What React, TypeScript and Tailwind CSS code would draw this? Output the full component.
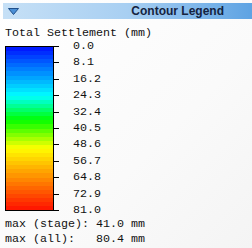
const LABELS = ["0.0", "8.1", "16.2", "24.3", "32.4", "40.5", "48.6", "56.7", "64.8", "72.9", "81.0"]

// colour stops of the contour scale, t from 0 (top) to 1 (bottom)
const STOPS: [number, number, number, number][] = [
    [0, 0, 16, 255],
    [0.3, 0, 255, 255],
    [0.45, 0, 255, 0],
    [0.62, 255, 255, 0],
    [1, 255, 16, 0],
]

const BANDS = 40

const colorAt = (t: number) => {
    for (let i = 1; i < STOPS.length; i++) {
        const [t1, r1, g1, b1] = STOPS[i]
        const [t0, r0, g0, b0] = STOPS[i - 1]
        if (t <= t1) {
            const k = (t - t0) / (t1 - t0)
            const mix = (a: number, b: number) => Math.round(a + (b - a) * k)
            return `rgb(${mix(r0, r1)}, ${mix(g0, g1)}, ${mix(b0, b1)})`
        }
    }
    return "rgb(255, 0, 0)"
}

export default function App() {
    return (
        <div className="w-[252px] h-[248px] overflow-hidden bg-[linear-gradient(135deg,#ffffff_0%,#fafafa_60%,#f4f4f4_100%)] pt-[3px] pl-[3px] font-['Liberation_Mono',monospace] text-[11.67px] text-[#111]">
            {/* Title bar */}
            <div className="h-[16px] flex items-center justify-between bg-[linear-gradient(90deg,#c6e0f6_0%,#a8cff2_50%,#5ea3e3_100%)] pl-[5px] pr-[28px]">
                <svg width="11" height="7" viewBox="0 0 11 7">
                    <path d="M0.5 0.5 H10.5 L5.5 6.5 Z" fill="#4a8fd6" stroke="#1f4f8a" strokeWidth="1" />
                </svg>
                <span className="font-['Liberation_Sans',sans-serif] font-bold text-[12px] leading-none text-[#15233f]">
                    Contour Legend
                </span>
            </div>

            <div className="pl-[2px]">
                <div className="mt-[8px] leading-[13px] whitespace-pre">Total Settlement (mm)</div>

                {/* Colour bar with ticks and labels */}
                <div className="mt-[6px] flex items-start">
                    <div className="w-[49px] h-[165px] border border-black flex flex-col">
                        {Array.from({ length: BANDS }, (_, i) => (
                            <div key={i} className="flex-1" style={{ backgroundColor: colorAt((i + 0.5) / BANDS) }} />
                        ))}
                    </div>
                    <div className="w-[5px] h-[165px] flex flex-col justify-between">
                        {LABELS.map((l) => (
                            <div key={l} className="h-px bg-black" />
                        ))}
                    </div>
                    <div className="ml-[14px] h-[173px] -mt-[4px] -mb-[4px] flex flex-col justify-between">
                        {LABELS.map((l) => (
                            <div key={l} className="h-[9px] leading-[9px]">{l}</div>
                        ))}
                    </div>
                </div>

                <div className="mt-[6px] leading-[15px] whitespace-pre">
                    <div>max (stage): 41.0 mm</div>
                    <div>max (all):   80.4 mm</div>
                </div>
            </div>
        </div>
    )
}
